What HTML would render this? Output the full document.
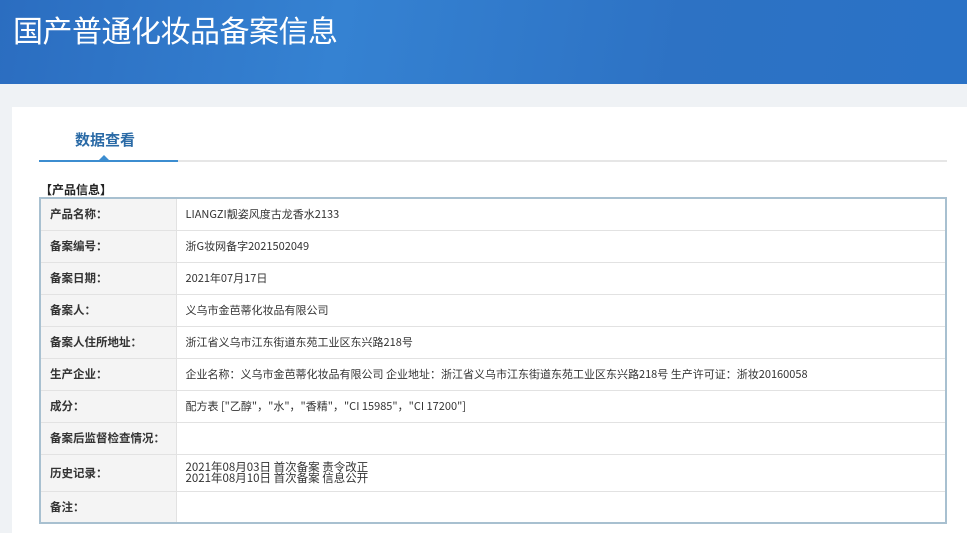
<!DOCTYPE html>
<html><head><meta charset="utf-8"><style>
*{margin:0;padding:0;box-sizing:border-box}
body{width:967px;height:533px;overflow:hidden;background:#eff2f5;font-family:"Liberation Sans","Noto Sans CJK SC",sans-serif;position:relative}
.hd{position:absolute;left:0;top:0;width:967px;height:84px;background:linear-gradient(100deg,#2b6dc0 0%,#3582d2 35%,#2d72c4 70%,#2a72c6 100%);overflow:hidden}
.hd h1{position:absolute;left:13px;top:7px;font-size:30px;font-weight:normal;color:#fff;letter-spacing:-0.5px;font-family:"Noto Sans CJK SC",sans-serif}
.panel{position:absolute;left:12px;top:107px;width:955px;height:426px;background:#fff}
.tab{position:absolute;left:75px;top:129px;font-size:15px;font-weight:bold;color:#2a6aa6;font-family:"Noto Sans CJK SC",sans-serif}
.gl{position:absolute;left:178px;top:160px;width:769px;height:2px;background:#e6e6e6}
.bl{position:absolute;left:39px;top:160px;width:139px;height:2px;background:#3c8dd0}
.tri{position:absolute;left:99px;top:155px;width:0;height:0;border-left:5px solid transparent;border-right:5px solid transparent;border-bottom:5px solid #3c8dd0}
.sec{position:absolute;left:40px;top:181px;font-size:12px;font-weight:bold;color:#222;font-family:"Noto Sans CJK SC",sans-serif}
table{position:absolute;left:39px;top:197px;width:908px;border-collapse:collapse;border:2px solid #a8c0d0;font-size:11px;color:#333;font-family:"Noto Sans CJK SC",sans-serif}
td{border-bottom:1px solid #e2e2e2;padding:0 9px;height:32px}
td.l{width:136px;background:#f4f4f4;font-weight:bold;color:#333;font-size:11.5px;border-right:1px solid #e2e2e2}
td.v{font-size:11px}
</style></head><body>
<div class="hd"><h1>国产普通化妆品备案信息</h1></div>
<div class="panel"></div>
<div class="tab">数据查看</div>
<div class="gl"></div><div class="bl"></div><div class="tri"></div>
<div class="sec">【产品信息】</div>
<table>
<tr><td class="l">产品名称：</td><td class="v">LIANGZI靓姿风度古龙香水2133</td></tr>
<tr><td class="l">备案编号：</td><td class="v">浙G妆网备字2021502049</td></tr>
<tr><td class="l">备案日期：</td><td class="v">2021年07月17日</td></tr>
<tr><td class="l">备案人：</td><td class="v">义乌市金芭蒂化妆品有限公司</td></tr>
<tr><td class="l">备案人住所地址：</td><td class="v">浙江省义乌市江东街道东苑工业区东兴路218号</td></tr>
<tr><td class="l">生产企业：</td><td class="v">企业名称：义乌市金芭蒂化妆品有限公司 企业地址：浙江省义乌市江东街道东苑工业区东兴路218号 生产许可证：浙妆20160058</td></tr>
<tr><td class="l">成分：</td><td class="v">配方表 ["乙醇"，"水"，"香精"，"CI 15985"，"CI 17200"]</td></tr>
<tr><td class="l">备案后监督检查情况：</td><td class="v"></td></tr>
<tr><td class="l" style="height:37px">历史记录：</td><td class="v" style="line-height:0.9;font-size:11.5px">2021年08月03日 首次备案 责令改正<br>2021年08月10日 首次备案 信息公开</td></tr>
<tr><td class="l" style="height:31px">备注：</td><td class="v"></td></tr>
</table>
</body></html>
